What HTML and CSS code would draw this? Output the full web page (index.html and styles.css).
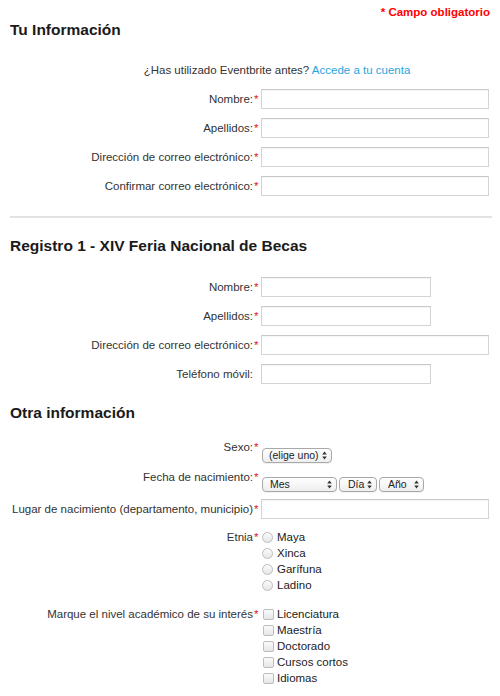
FILE: index.html
```html
<!DOCTYPE html>
<html lang="es">
<head>
<meta charset="utf-8">
<title>Registro</title>
<link rel="stylesheet" href="styles.css">
</head>
<body>
<div class="page">
  <div class="required-note">* Campo obligatorio</div>

  <section class="section">
    <h2 class="section-title first">Tu Información</h2>
    <p class="login-hint">¿Has utilizado Eventbrite antes? <a class="login-link" href="#">Accede a tu cuenta</a></p>
    <div class="fields">
      <div class="field">
        <label class="field-label">Nombre:<span class="req">*</span></label>
        <input class="text-input long" type="text">
      </div>
      <div class="field">
        <label class="field-label">Apellidos:<span class="req">*</span></label>
        <input class="text-input long" type="text">
      </div>
      <div class="field">
        <label class="field-label">Dirección de correo electrónico:<span class="req">*</span></label>
        <input class="text-input long" type="text">
      </div>
      <div class="field">
        <label class="field-label">Confirmar correo electrónico:<span class="req">*</span></label>
        <input class="text-input long" type="text">
      </div>
    </div>
  </section>

  <hr class="divider">

  <section class="section">
    <h2 class="section-title second">Registro 1 - XIV Feria Nacional de Becas</h2>
    <div class="fields registro">
      <div class="field">
        <label class="field-label">Nombre:<span class="req">*</span></label>
        <input class="text-input short" type="text">
      </div>
      <div class="field">
        <label class="field-label">Apellidos:<span class="req">*</span></label>
        <input class="text-input short" type="text">
      </div>
      <div class="field">
        <label class="field-label">Dirección de correo electrónico:<span class="req">*</span></label>
        <input class="text-input long" type="text">
      </div>
      <div class="field">
        <label class="field-label">Teléfono móvil:<span class="req"></span></label>
        <input class="text-input short" type="text">
      </div>
    </div>
  </section>

  <section class="section">
    <h2 class="section-title third">Otra información</h2>
    <div class="fields otra">
      <div class="field top">
        <label class="field-label">Sexo:<span class="req">*</span></label>
        <div class="select-group sexo-group">
          <span class="select-wrap">
            <select class="select sexo"><option>(elige uno)</option></select>
            <svg class="select-arrows" width="5" height="9" viewBox="0 0 5 9"><path d="M2.5 0.5 L4.8 3.6 H0.2 Z M2.5 8.5 L4.8 5.4 H0.2 Z" fill="#333"/></svg>
          </span>
        </div>
      </div>
      <div class="field top">
        <label class="field-label">Fecha de nacimiento:<span class="req">*</span></label>
        <div class="select-group fecha-group">
          <span class="select-wrap">
            <select class="select mes"><option>Mes</option></select>
            <svg class="select-arrows" width="5" height="9" viewBox="0 0 5 9"><path d="M2.5 0.5 L4.8 3.6 H0.2 Z M2.5 8.5 L4.8 5.4 H0.2 Z" fill="#333"/></svg>
          </span>
          <span class="select-wrap">
            <select class="select dia"><option>Día</option></select>
            <svg class="select-arrows" width="5" height="9" viewBox="0 0 5 9"><path d="M2.5 0.5 L4.8 3.6 H0.2 Z M2.5 8.5 L4.8 5.4 H0.2 Z" fill="#333"/></svg>
          </span>
          <span class="select-wrap">
            <select class="select anio"><option>Año</option></select>
            <svg class="select-arrows" width="5" height="9" viewBox="0 0 5 9"><path d="M2.5 0.5 L4.8 3.6 H0.2 Z M2.5 8.5 L4.8 5.4 H0.2 Z" fill="#333"/></svg>
          </span>
        </div>
      </div>
      <div class="field">
        <label class="field-label">Lugar de nacimiento (departamento, municipio)<span class="req">*</span></label>
        <input class="text-input long" type="text">
      </div>
      <div class="field top etnia">
        <label class="field-label opt-label">Etnia<span class="req">*</span></label>
        <div class="options">
          <label class="option"><input class="radio" type="radio" name="etnia"><span>Maya</span></label>
          <label class="option"><input class="radio" type="radio" name="etnia"><span>Xinca</span></label>
          <label class="option"><input class="radio" type="radio" name="etnia"><span>Garífuna</span></label>
          <label class="option"><input class="radio" type="radio" name="etnia"><span>Ladino</span></label>
        </div>
      </div>
      <div class="field top nivel">
        <label class="field-label opt-label">Marque el nivel académico de su interés<span class="req">*</span></label>
        <div class="options">
          <label class="option"><input class="check" type="checkbox"><span>Licenciatura</span></label>
          <label class="option"><input class="check" type="checkbox"><span>Maestría</span></label>
          <label class="option"><input class="check" type="checkbox"><span>Doctorado</span></label>
          <label class="option"><input class="check" type="checkbox"><span>Cursos cortos</span></label>
          <label class="option"><input class="check" type="checkbox"><span>Idiomas</span></label>
        </div>
      </div>
    </div>
  </section>
</div>
</body>
</html>
```

FILE: styles.css
```css
* {
  box-sizing: border-box;
}

body {
  margin: 0;
  background: #fff;
  font-family: "Liberation Sans", Arial, Helvetica, sans-serif;
  font-size: 11.5px;
  color: #333;
}

.page {
  padding: 0 8px 0 10px;
}

.required-note {
  padding-top: 5px;
  padding-right: 2px;
  line-height: 14px;
  text-align: right;
  color: #f00;
  font-weight: bold;
}

.section-title {
  margin: 0;
  font-size: 15.5px;
  line-height: 18px;
  font-weight: bold;
  color: #1a1a1a;
}

.section-title.first {
  margin-top: 2px;
}

.section-title.second {
  margin-top: 19px;
}

.section-title.third {
  margin-top: 20px;
}

.login-hint {
  margin: 24px 0 0;
  padding-left: 52px;
  line-height: 14px;
  text-align: center;
  color: #333;
}

.login-link {
  color: #1fa4e0;
  text-decoration: none;
}

.fields {
  display: flex;
  flex-direction: column;
  gap: 9px;
  margin-top: 12px;
}

.fields.registro {
  margin-top: 22px;
}

.fields.otra {
  margin-top: 18px;
  gap: 7px;
}

.field {
  display: grid;
  grid-template-columns: 249px auto;
  column-gap: 2px;
  align-items: center;
}

.field.top {
  align-items: start;
}

.field.etnia {
  margin-top: 3px;
}

.field.nivel {
  margin-top: 6px;
}

.field-label {
  text-align: right;
  line-height: 14px;
  color: #333;
  white-space: nowrap;
}

.opt-label {
  line-height: 16px;
}

.req {
  display: inline-block;
  width: 6px;
  padding-left: 1px;
  text-align: left;
  color: #e0161b;
}

.text-input {
  height: 20px;
  margin: 0;
  border: 1px solid #d4d4d4;
  border-top-color: #c8c8c8;
  border-radius: 0;
  background: #fff;
  box-shadow: inset 0 1px 1px rgba(0, 0, 0, 0.04);
  padding: 0 3px;
  font: inherit;
}

.text-input.long {
  width: 228px;
}

.text-input.short {
  width: 170px;
}

.select-group {
  display: flex;
  gap: 2px;
  padding-left: 1px;
}

.sexo-group {
  margin-top: 8px;
}

.fecha-group {
  margin-top: 7px;
}

.select-wrap {
  position: relative;
  display: inline-block;
  height: 15px;
}

.select {
  -webkit-appearance: none;
  appearance: none;
  display: block;
  height: 15px;
  margin: 0;
  padding: 0 0 0 7px;
  border: 1px solid #a9a9a9;
  border-radius: 4px;
  background: linear-gradient(#ffffff, #eeeeee);
  box-shadow: 0 1px 0 rgba(0, 0, 0, 0.05);
  font-family: "Liberation Sans", Arial, Helvetica, sans-serif;
  font-size: 10.5px;
  line-height: 13px;
  color: #222;
}

.select.sexo {
  width: 70px;
  padding-left: 6px;
}

.select.mes {
  width: 75px;
}

.select.dia {
  width: 38px;
  padding-left: 8px;
}

.select.anio {
  width: 45px;
  padding-left: 8px;
}

.select-arrows {
  position: absolute;
  right: 5px;
  top: 3px;
  pointer-events: none;
}

.options {
  display: flex;
  flex-direction: column;
}

.option {
  display: flex;
  align-items: center;
  height: 16px;
  line-height: 16px;
  color: #222;
}

.radio,
.check {
  -webkit-appearance: none;
  appearance: none;
  width: 11px;
  height: 11px;
  margin: 0 4px 0 1px;
  border: 1px solid #bdbdbd;
  background: linear-gradient(#fbfbfb, #e6e6e6);
  flex: none;
}

.radio {
  border-radius: 50%;
}

.check {
  margin-left: 2px;
  margin-right: 3px;
  border-radius: 2px;
}

.divider {
  height: 2px;
  margin: 20px 0 0;
  border: 0;
  background: #e2e2e2;
}
```
